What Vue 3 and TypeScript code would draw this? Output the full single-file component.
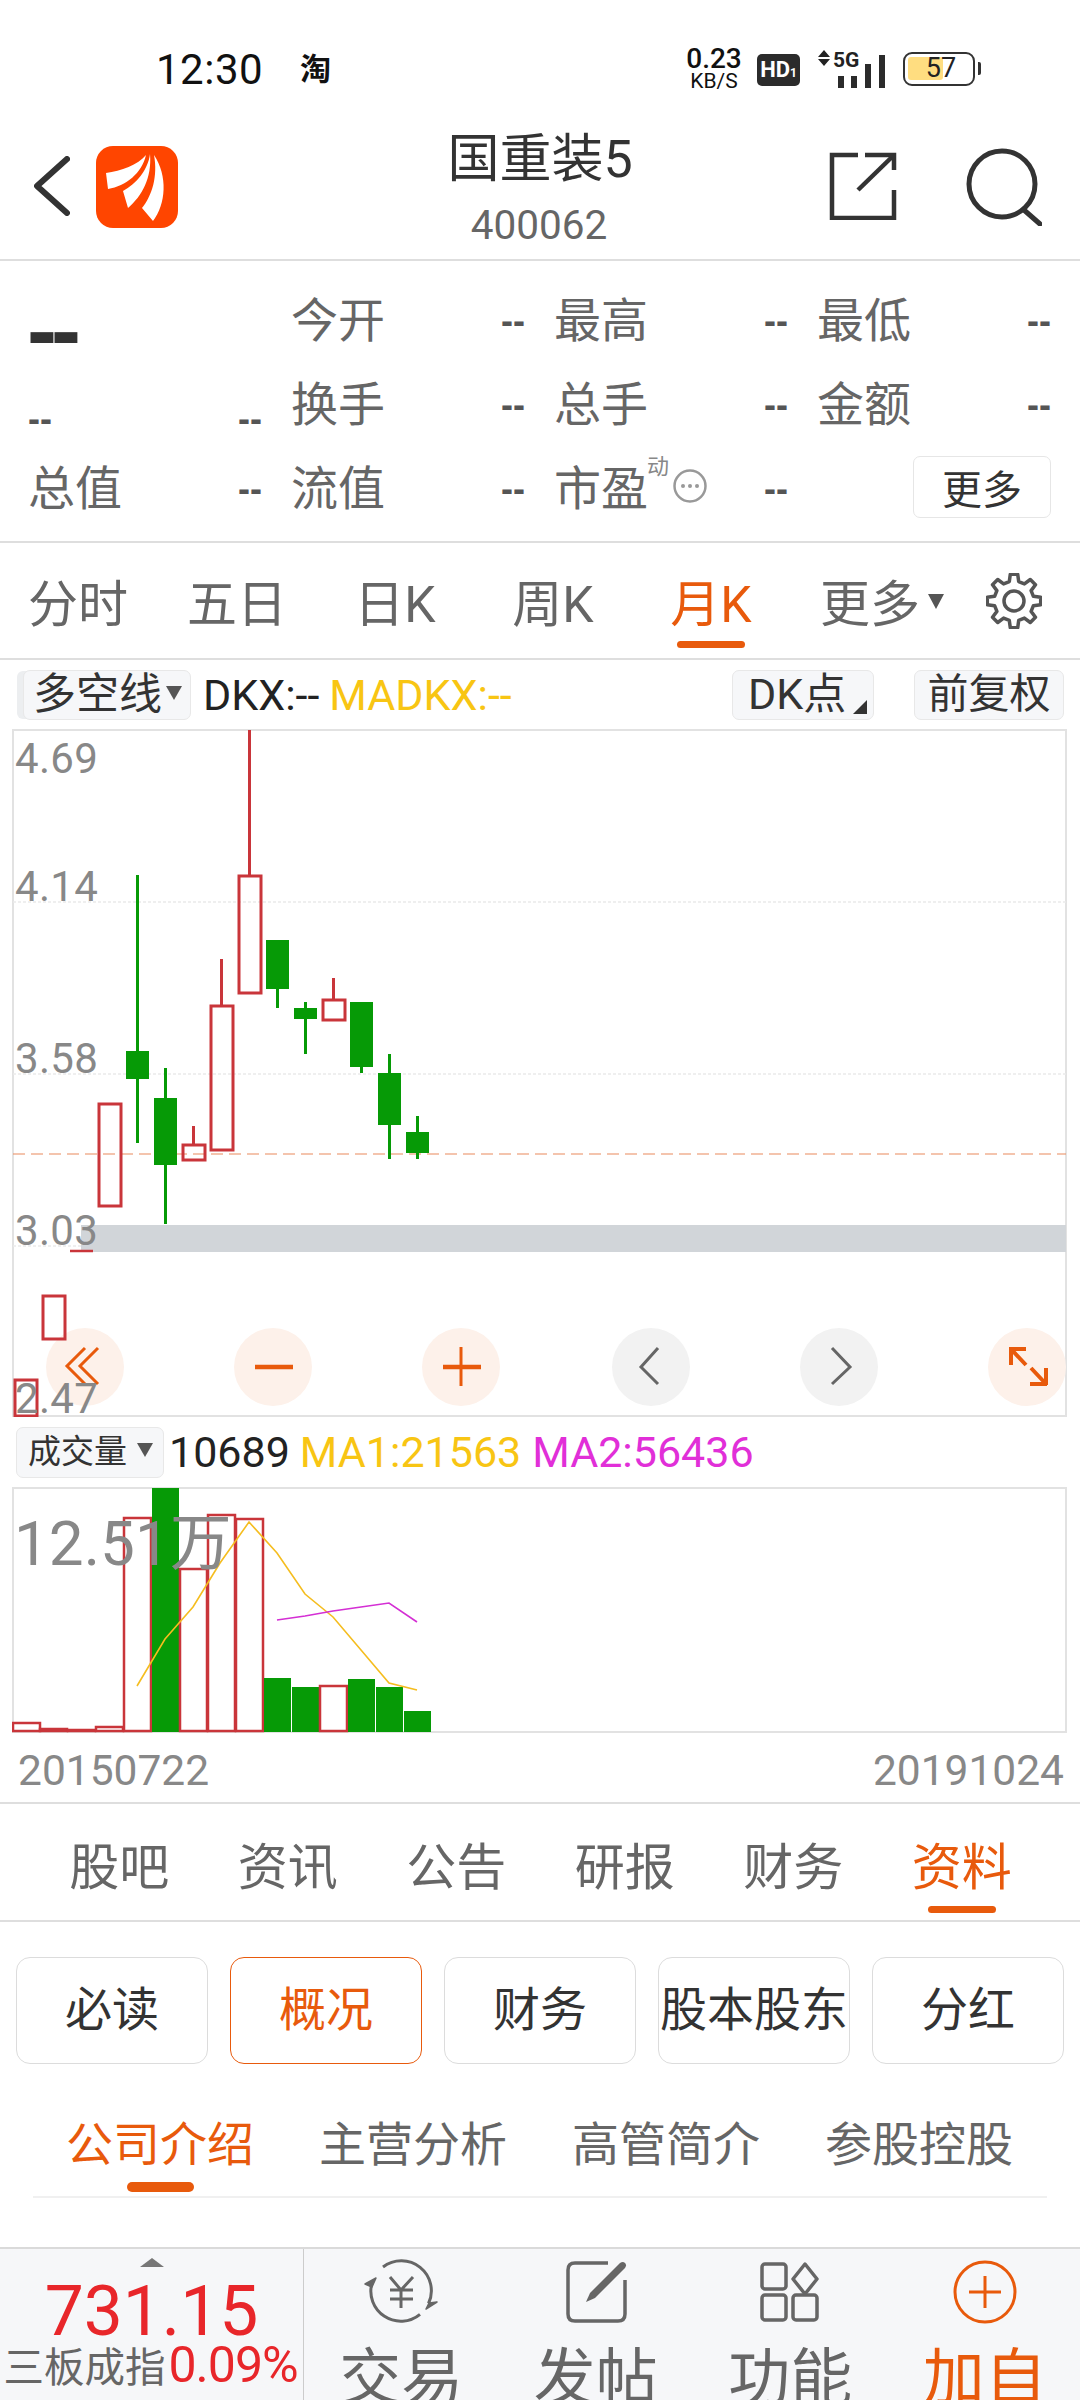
<script setup lang="ts">
interface Candle { x: number; w: number; top: number; bot: number; hi: number; lo: number; up: boolean }
const candles: Candle[] = [
  { x: 14, w: 23, top: 1379, bot: 1416, hi: 1379, lo: 1416, up: true },
  { x: 42, w: 23, top: 1295, bot: 1339, hi: 1295, lo: 1339, up: true },
  { x: 98, w: 23, top: 1103, bot: 1206, hi: 1103, lo: 1206, up: true },
  { x: 126, w: 23, top: 1051, bot: 1079, hi: 875, lo: 1143, up: false },
  { x: 154, w: 23, top: 1098, bot: 1165, hi: 1068, lo: 1224, up: false },
  { x: 182, w: 23, top: 1144, bot: 1160, hi: 1126, lo: 1160, up: true },
  { x: 210, w: 23, top: 1005, bot: 1150, hi: 959, lo: 1150, up: true },
  { x: 238, w: 23, top: 875, bot: 993, hi: 730, lo: 993, up: true },
  { x: 266, w: 23, top: 940, bot: 989, hi: 940, lo: 1008, up: false },
  { x: 294, w: 23, top: 1008, bot: 1019, hi: 1002, lo: 1054, up: false },
  { x: 322, w: 23, top: 999, bot: 1020, hi: 978, lo: 1054, up: true },
  { x: 350, w: 23, top: 1002, bot: 1067, hi: 1002, lo: 1073, up: false },
  { x: 378, w: 23, top: 1073, bot: 1125, hi: 1054, lo: 1159, up: false },
  { x: 406, w: 23, top: 1132, bot: 1153, hi: 1116, lo: 1159, up: false },
]
const axis = [
  { t: '4.69', y: 773 },
  { t: '4.14', y: 901 },
  { t: '3.58', y: 1073 },
  { t: '3.03', y: 1245 },
  { t: '2.47', y: 1413 },
]
const circles = [
  { x: 85, tint: true }, { x: 273, tint: true }, { x: 461, tint: true },
  { x: 651, tint: false }, { x: 839, tint: false }, { x: 1027, tint: true },
]
interface Bar { x: number; top: number; up: boolean }
const bars: Bar[] = [
  { x: 13, top: 1723, up: true }, { x: 40, top: 1729, up: true }, { x: 68, top: 1730, up: true },
  { x: 96, top: 1727, up: true }, { x: 124, top: 1518, up: true }, { x: 152, top: 1488, up: false },
  { x: 180, top: 1569, up: true }, { x: 208, top: 1515, up: true }, { x: 236, top: 1519, up: true },
  { x: 264, top: 1678, up: false }, { x: 292, top: 1687, up: false }, { x: 320, top: 1686, up: true },
  { x: 348, top: 1679, up: false }, { x: 376, top: 1687, up: false }, { x: 404, top: 1711, up: false },
]
const ma1 = '137,1686 165,1639 193,1607 220,1563 249,1522 277,1553 305,1594 333,1617 361,1650 389,1683 417,1690'
const ma2 = '277,1620 305,1616 333,1611 361,1607 389,1603 417,1622'
const gear = (() => {
  const teeth = 8
  const pts: string[] = []
  for (let i = 0; i < teeth; i++) {
    const a = (i / teeth) * Math.PI * 2 - Math.PI / 2
    const step = Math.PI / teeth
    const p = (r: number, o: number) =>
      `${(28 + r * Math.cos(a + o)).toFixed(1)},${(28 + r * Math.sin(a + o)).toFixed(1)}`
    pts.push(p(27, -step * 0.35), p(27, step * 0.35), p(20, step * 0.6), p(20, step * 1.4))
  }
  return pts.join(' ')
})()
const nTabs = ['股吧', '资讯', '公告', '研报', '财务', '资料']
const sections = ['必读', '概况', '财务', '股本股东', '分红']
const subs = ['公司介绍', '主营分析', '高管简介', '参股控股']
</script>

<template>
  <div class="page">
    <div class="status">
      <span class="clock">12:30</span>
      <span class="tao">淘</span>
      <span class="speed"><b>0.23</b><i>KB/S</i></span>
      <span class="hd">HD<small>1</small></span>
      <svg class="signal" width="68" height="40" viewBox="0 0 68 40">
        <path d="M0 7 6 0l6 7ZM0 9l6 7 6-7Z" fill="#222" />
        <text x="15" y="17" class="s5g">5G</text>
        <rect x="20" y="26" width="6" height="12" fill="#2b2b2b" />
        <rect x="33" y="26" width="6" height="12" fill="#2b2b2b" />
        <rect x="47" y="14" width="6" height="24" fill="#2b2b2b" />
        <rect x="61" y="5" width="6" height="33" fill="#2b2b2b" />
      </svg>
      <span class="battery"><em></em><span>57</span></span>
      <span class="nub"></span>
    </div>

    <header class="head">
      <div class="head-left">
        <svg width="36" height="60" viewBox="0 0 36 60">
          <path d="M33 3 3 30 33 57" fill="none" stroke="#333" stroke-width="6" stroke-linecap="round" stroke-linejoin="round" />
        </svg>
        <svg class="logo" width="82" height="82" viewBox="0 0 82 82">
          <rect width="82" height="82" rx="17" fill="#ff4500" />
          <path d="M50 9C42 19 25 25 10 27L12 43C30 40 46 27 50 9Z" fill="#fff" />
          <path d="M54 8C52 24 40 38 27 45L32 62C46 50 56 32 54 8Z" fill="#fff" />
          <path d="M58 9C62 30 56 50 46 62L57 75C70 58 72 30 58 9Z" fill="#fff" />
        </svg>
      </div>
      <div class="head-mid">
        <div class="title">国重装5</div>
        <div class="code">400062</div>
      </div>
      <div class="head-right">
        <svg width="68" height="68" viewBox="0 0 68 68" fill="none" stroke="#333" stroke-width="4.5">
          <path d="M29 3H3V66H65V38" />
          <path d="M29 38 64 4" />
          <path d="M36 3H65V18" />
        </svg>
        <svg width="76" height="78" viewBox="0 0 76 78" fill="none" stroke="#333" stroke-width="5">
          <circle cx="36" cy="36" r="33" />
          <path d="M58 62 74 76" stroke-linecap="round" />
        </svg>
      </div>
    </header>

    <section class="quote">
      <div class="cell first"><span class="bigdash">--</span></div>
      <div class="cell"><span>今开</span><b>--</b></div>
      <div class="cell"><span>最高</span><b>--</b></div>
      <div class="cell"><span>最低</span><b>--</b></div>
      <div class="cell low"><b>--</b><b>--</b></div>
      <div class="cell"><span>换手</span><b>--</b></div>
      <div class="cell"><span>总手</span><b>--</b></div>
      <div class="cell"><span>金额</span><b>--</b></div>
      <div class="cell"><span>总值</span><b>--</b></div>
      <div class="cell"><span>流值</span><b>--</b></div>
      <div class="cell pe">
        <span>市盈</span>
        <sup>动</sup>
        <svg width="34" height="34" viewBox="0 0 34 34">
          <circle cx="17" cy="17" r="15.5" fill="none" stroke="#999" stroke-width="2.5" />
          <circle cx="10" cy="17" r="2" fill="#999" /><circle cx="17" cy="17" r="2" fill="#999" /><circle cx="24" cy="17" r="2" fill="#999" />
        </svg>
        <b>--</b>
      </div>
      <div class="cell more-cell"><button class="more">更多</button></div>
    </section>

    <nav class="ktabs">
      <span class="ktab">分时</span>
      <span class="ktab">五日</span>
      <span class="ktab">日K</span>
      <span class="ktab">周K</span>
      <span class="ktab on">月K</span>
      <span class="ktab wide">更多<i class="tri"></i></span>
      <svg class="gear" width="56" height="56" viewBox="0 0 56 56" fill="none" stroke="#555" stroke-width="3.5" stroke-linejoin="round">
        <polygon :points="gear" />
        <circle cx="28" cy="28" r="10" />
      </svg>
    </nav>

    <div class="ind">
      <span class="pick first-pick">多空线<i class="tri small"></i></span>
      <span class="val dark">DKX:--</span>
      <span class="val gold">MADKX:--</span>
      <span class="pick dk">DK点<i class="corner"></i></span>
      <span class="pick fq">前复权</span>
    </div>

    <svg class="chart" width="1055" height="688" viewBox="12 729 1055 688">
      <rect x="13" y="730" width="1053" height="686" fill="#fff" stroke="#e2e2e2" stroke-width="2" />
      <path v-for="y in [902, 1074, 1246]" :key="y" :d="`M13 ${y}H1066`" stroke="#eaeaea" stroke-width="1.5" stroke-dasharray="3 2" />
      <rect x="81" y="1225" width="985" height="27" fill="#d1d5d9" />
      <circle v-for="c in circles" :key="c.x" :cx="c.x" cy="1367" r="39" :fill="c.tint ? '#fdf1ea' : '#f2f2f2'" />
      <path d="M13 1154H1066" stroke="#ea8a5c" stroke-width="1.1" stroke-dasharray="12 6" />
      <path d="M70 1251H93" stroke="#c9353a" stroke-width="2.5" />
      <g v-for="c in candles" :key="c.x">
        <template v-if="c.up">
          <path :d="`M${c.x + 11.5} ${c.hi}V${c.top}`" stroke="#c9353a" stroke-width="3" />
          <rect :x="c.x + 1" :y="c.top + 1" :width="c.w - 1" :height="c.bot - c.top - 1" fill="none" stroke="#c9353a" stroke-width="3" />
        </template>
        <template v-else>
          <path :d="`M${c.x + 11.5} ${c.hi}V${c.lo}`" stroke="#069a06" stroke-width="3" />
          <rect :x="c.x" :y="c.top" :width="c.w" :height="c.bot - c.top" fill="#069a06" />
        </template>
      </g>
      <g fill="none" stroke="#e85a0c" stroke-width="3">
        <path d="M85 1348 67 1366 85 1384M98 1348 80 1366 98 1384" />
        <path d="M255 1367H293M443 1367H481" stroke-width="4.5" />
        <path d="M461 1347V1386" />
        <path d="M1009 1349H1026M1011 1347V1365M1011 1349 1026 1365M1030 1384H1047M1046 1368V1385M1031 1368 1046 1384" stroke-width="4" />
      </g>
      <path d="M658 1348 641 1367 658 1384M832 1348 850 1367 832 1384" fill="none" stroke="#666" stroke-width="3" />
      <text v-for="a in axis" :key="a.t" x="15" :y="a.y" class="axis">{{ a.t }}</text>
    </svg>

    <div class="ind vol-ind">
      <span class="pick vol-pick">成交量<i class="tri small"></i></span>
      <span class="val dark">10689</span>
      <span class="val gold">MA1:21563</span>
      <span class="val pink">MA2:56436</span>
    </div>

    <svg class="volchart" width="1055" height="246" viewBox="12 1487 1055 246">
      <rect x="13" y="1488" width="1053" height="244" fill="#fff" stroke="#e2e2e2" stroke-width="2" />
      <g v-for="b in bars" :key="b.x">
        <rect v-if="b.up" :x="b.x" :y="b.top" width="27" :height="1731 - b.top" fill="#fff" stroke="#c9353a" stroke-width="2.5" />
        <rect v-else :x="b.x" :y="b.top" width="27" :height="1732 - b.top" fill="#069a06" />
      </g>
      <polyline :points="ma1" fill="none" stroke="#f5bd1f" stroke-width="1.6" />
      <polyline :points="ma2" fill="none" stroke="#d42fd4" stroke-width="1.6" />
      <text x="14" y="1565" class="vol-label">12.51万</text>
    </svg>

    <div class="dates"><span>20150722</span><span>20191024</span></div>

    <nav class="ntabs">
      <span v-for="(t, i) in nTabs" :key="t + i" class="ntab" :class="{ on: i === 5 }">{{ t }}</span>
    </nav>

    <div class="secs">
      <span v-for="(s, i) in sections" :key="s" class="sec" :class="{ on: i === 1 }">{{ s }}</span>
    </div>

    <nav class="subs">
      <span v-for="(s, i) in subs" :key="s" class="sub" :class="{ on: i === 0 }">{{ s }}</span>
    </nav>

    <footer class="foot">
      <div class="index">
        <i class="uptri"></i>
        <div class="price">731.15</div>
        <div class="idx-row"><span>三板成指</span><b>0.09%</b></div>
      </div>
      <div class="act">
        <svg width="76" height="66" viewBox="0 0 76 66" fill="none" stroke="#666" stroke-width="3">
          <path d="M20 8A30 30 0 0 1 65.5 44.5" />
          <path d="M63 50 74 43 66 44Z" fill="#666" stroke-width="1.5" stroke-linejoin="round" />
          <path d="M57 55.3A30 30 0 0 1 9 24" />
          <path d="M2 25 13 19 9 28Z" fill="#666" stroke-width="1.5" stroke-linejoin="round" />
          <path d="M27 18 38 31 50 18M38 31V49M27 31H50M27 40H50" stroke-width="3" />
        </svg>
        <span>交易</span>
      </div>
      <div class="act">
        <svg width="66" height="66" viewBox="0 0 66 66" fill="none" stroke="#666" stroke-width="3.5">
          <path d="M45 4H12Q5 4 5 11V55Q5 62 12 62H55Q62 62 62 55V21" />
          <path d="M23 43 27 34 57 4Q60 2 62 4 64 6 62 9L32 39Z" fill="#666" stroke="none" />
        </svg>
        <span>发帖</span>
      </div>
      <div class="act">
        <svg width="62" height="62" viewBox="0 0 62 62" fill="none" stroke="#666" stroke-width="3.5">
          <rect x="3" y="3" width="24" height="25" rx="3" />
          <rect x="3" y="34" width="24" height="25" rx="3" />
          <rect x="34" y="34" width="24" height="25" rx="3" />
          <path d="M46 3 58 18 46 33 34 18Z" stroke-linejoin="round" />
        </svg>
        <span>功能</span>
      </div>
      <div class="act orange">
        <svg width="66" height="66" viewBox="0 0 66 66" fill="none" stroke="#e85a0c" stroke-width="3">
          <circle cx="33" cy="33" r="30" />
          <path d="M17 33H49M33 17V49" />
        </svg>
        <span>加自</span>
      </div>
    </footer>
  </div>
</template>

<style scoped>
.page {
  width: 1080px;
  height: 2400px;
  overflow: hidden;
  background: #fff;
  font-family: Roboto, "Noto Sans CJK SC", sans-serif;
  color: #333;
}
i, em { font-style: normal; }

/* status */
.status { height: 100px; position: relative; display: flex; align-items: flex-start; }
.clock { margin: 46px 0 0 156px; width: 108px; font-size: 42px; line-height: 48px; color: #111; letter-spacing: 0.5px; white-space: nowrap; }
.tao { margin: 52px 0 0 36px; font-size: 31px; line-height: 36px; font-weight: 700; color: #111; }
.speed { margin: 46px 0 0 355px; width: 56px; display: flex; flex-direction: column; align-items: center; color: #111; }
.speed b { font-size: 28px; line-height: 26px; font-weight: 500; }
.speed i { font-size: 21px; line-height: 19px; }
.hd { margin: 54px 0 0 15px; width: 43px; height: 32px; border-radius: 5px; background: #2b2b2b; color: #fff; font-size: 22px; line-height: 32px; font-weight: 700; text-align: center; }
.hd small { font-size: 12px; }
.signal { margin: 50px 0 0 18px; }
.s5g { font: 700 21px Roboto, sans-serif; fill: #222; }
.battery { margin: 52px 0 0 17px; width: 72px; height: 34px; box-sizing: border-box; border: 2.5px solid #333; border-radius: 9px; position: relative; font-size: 27px; line-height: 29px; color: #222; text-align: center; }
.battery em { position: absolute; left: 3px; top: 3px; width: 35px; height: 23px; background: #ffdd80; border-radius: 3px; }
.battery span { position: relative; left: 2px; }
.nub { margin: 62px 0 0 3px; width: 3px; height: 13px; background: #333; border-radius: 0 2px 2px 0; }

/* header */
.head { height: 161px; box-sizing: border-box; border-bottom: 2px solid #dedede; display: grid; grid-template-columns: 1fr auto 1fr; align-items: start; }
.head-left { display: flex; padding: 46px 0 0 34px; }
.head-left svg:first-child { margin-top: 10px; }
.logo { margin-left: 26px; }
.head-mid { text-align: center; padding-top: 31px; }
.title { font-size: 52px; line-height: 58px; color: #333; }
.code { font-size: 40.5px; line-height: 46px; color: #666; margin: 13px 2px 0 0; }
.head-right { display: flex; justify-content: flex-end; align-items: flex-start; padding: 48px 38px 0 0; gap: 69px; }
.head-right svg:first-child { margin-top: 4px; }

/* quote */
.quote { height: 282px; box-sizing: border-box; border-bottom: 2px solid #dedede; padding: 18px 28px 0 28px; display: grid; grid-template-columns: repeat(4, 234px); column-gap: 29px; grid-auto-rows: 84px; }
.cell { display: flex; justify-content: space-between; align-items: center; position: relative; }
.cell span { font-size: 47px; color: #666; line-height: 56px; }
.cell b { font-family: "Liberation Sans", sans-serif; font-size: 36px; font-weight: 700; color: #555; line-height: 56px; }
.low { align-items: flex-end; }
.first { align-items: flex-start; }
.bigdash { font-family: "Liberation Sans", sans-serif; font-size: 90px !important; font-weight: 700; color: #333 !important; line-height: 72px !important; margin: 15px 0 0 -1px; letter-spacing: -6px; }
.pe { justify-content: flex-start; }
.pe sup { position: absolute; left: 93px; top: 7px; font-size: 22px; line-height: 26px; color: #888; }
.pe svg { position: absolute; left: 119px; top: 22px; }
.pe b { margin-left: auto; }
.more-cell { justify-content: flex-end; align-items: flex-start; padding-top: 9px; }
.more { width: 138px; height: 62px; padding: 0; background: #fff; border: 1.5px solid #e6e6e6; border-radius: 7px; font: 40px Roboto, "Noto Sans CJK SC", sans-serif; color: #333; }

/* k tabs */
.ktabs { height: 117px; box-sizing: border-box; border-bottom: 2px solid #dedede; display: flex; align-items: center; position: relative; padding-left: 0; }
.ktab { width: 158px; flex: none; text-align: center; font-size: 50px; line-height: 60px; color: #666; position: relative; margin-top: 9px; }
.ktab:first-child { text-indent: -2px; }
.ktab.wide { padding-left: 30px; box-sizing: border-box; text-align: left; white-space: nowrap; }
.ktab.on { color: #e85a0c; }
.ktab.on::after { content: ""; position: absolute; left: 45px; top: 66px; width: 68px; height: 7px; border-radius: 4px; background: #e85a0c; }
.tri { position: absolute; left: 138px; top: 19px; border-left: 8px solid transparent; border-right: 8px solid transparent; border-top: 15px solid #555; }
.gear { position: absolute; left: 986px; top: 30px; }

/* indicator */
.ind { height: 69px; display: flex; align-items: flex-start; padding: 10px 16px 0 23px; box-sizing: border-box; }
.pick { height: 50px; box-sizing: border-box; background: #f6f7f9; border: 1.5px solid #e8e8e8; border-radius: 7px; font-size: 43px; line-height: 46px; color: #333; position: relative; white-space: nowrap; }
.first-pick { width: 168px; padding-left: 9px; box-shadow: -7px 0 0 -1px #eceef0; }
.tri.small { left: auto; right: 8px; top: 15px; border-left-width: 8px; border-right-width: 8px; border-top-width: 14px; }
.val { font-size: 43px; line-height: 50px; white-space: nowrap; }
.dark { color: #222; margin-left: 12px; }
.gold { color: #f8c513; margin-left: 10px; }
.pink { color: #e12fd8; margin-left: 11px; }
.dk { margin-left: auto; width: 142px; padding-left: 15px; }
.corner { position: absolute; right: 6px; bottom: 5px; border-left: 14px solid transparent; border-bottom: 14px solid #333; }
.fq { margin-left: 40px; width: 150px; text-align: center; font-size: 41px; }
.chart, .volchart { display: block; margin-left: 12px; }
.axis { font: 42px Roboto, sans-serif; fill: #888; letter-spacing: 0.3px; }
.vol-ind { height: 70px; padding-left: 16px; }
.vol-pick { width: 148px; padding-left: 11px; font-size: 33px; height: 51px; line-height: 48px; }
.vol-pick .tri { right: 10px; top: 15px; }
.vol-ind .dark { margin-left: 5px; }
.vol-label { font: 62px Roboto, "Noto Sans CJK SC", sans-serif; fill: #888; }

/* dates */
.dates { height: 71px; box-sizing: border-box; border-bottom: 2px solid #dedede; display: flex; justify-content: space-between; padding: 13px 16px 0 18px; font-size: 42.5px; line-height: 50px; color: #888; }

/* news tabs */
.ntabs { height: 118px; box-sizing: border-box; border-bottom: 2px solid #dedede; display: grid; grid-template-columns: repeat(6, 168.5px); padding: 34px 0 0 35px; }
.ntab { text-align: center; font-size: 50px; line-height: 60px; color: #666; position: relative; }
.ntab.on { color: #e85a0c; }
.ntab.on::after { content: ""; position: absolute; left: 50px; top: 68px; width: 68px; height: 7px; border-radius: 4px; background: #e85a0c; }

/* sections */
.secs { display: flex; gap: 22px; padding: 35px 0 0 16px; }
.sec { width: 192px; height: 107px; box-sizing: border-box; border: 1.5px solid #dcdcdc; border-radius: 14px; text-align: center; font-size: 47px; line-height: 104px; color: #333; white-space: nowrap; }
.sec.on { border-color: #e85a0c; color: #e85a0c; }

/* subs */
.subs { margin: 0 33px; height: 134px; box-sizing: border-box; border-bottom: 2px solid #f0f0f0; display: flex; padding: 52px 0 0 33px; }
.sub { width: 186px; font-size: 47px; line-height: 58px; color: #666; white-space: nowrap; position: relative; margin-right: 67px; }
.sub.on { color: #e85a0c; }
.sub.on::after { content: ""; position: absolute; left: 61px; top: 66px; width: 67px; height: 10px; border-radius: 5px; background: #e85a0c; }

/* footer */
.foot { margin-top: 49px; height: 153px; background: #f6f7f9; border-top: 2px solid #dadada; display: flex; overflow: hidden; }
.index { width: 304px; flex: none; box-sizing: border-box; border-right: 1.5px solid #ccc; position: relative; display: flex; flex-direction: column; align-items: center; }
.uptri { position: absolute; left: 140px; top: 9px; border-left: 12px solid transparent; border-right: 12px solid transparent; border-bottom: 9px solid #777; }
.price { margin-top: 24px; font-size: 69.5px; line-height: 78px; color: #e8262a; }
.idx-row { display: flex; align-items: baseline; width: 304px; padding-left: 4px; box-sizing: border-box; line-height: 50px; margin-top: -11px; white-space: nowrap; }
.idx-row span { font-size: 40.5px; color: #666; }
.idx-row b { font-size: 50px; font-weight: 400; color: #e8262a; margin-left: 3px; letter-spacing: -1px; }
.act { width: 194.5px; flex: none; display: flex; flex-direction: column; align-items: center; padding-top: 10px; font-size: 62px; line-height: 76px; color: #666; }
.act svg { flex: none; height: 66px; }
.act span { margin-top: 16px; }
.act.orange { color: #e85a0c; }
</style>

<style>
html, body { margin: 0; padding: 0; background: #fff; }
</style>
